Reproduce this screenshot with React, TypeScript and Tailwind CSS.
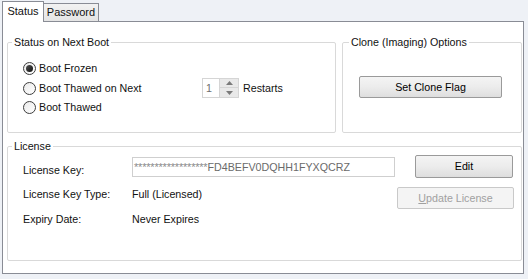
import React from 'react';

const Radio: React.FC<{ checked?: boolean; label: string }> = ({ checked, label }) => (
  <div className="flex items-center h-[19px]">
    <span className="flex items-center justify-center w-[13px] h-[13px] rounded-full border border-[#3d3d3d] bg-gradient-to-br from-[#eaeaea] to-white">
      {checked && <span className="w-[7px] h-[7px] rounded-full bg-gradient-to-br from-[#555] to-[#111]" />}
    </span>
    <span className="ml-[3px] leading-[13px]">{label}</span>
  </div>
);

const Button: React.FC<{ className?: string; disabled?: boolean; children: React.ReactNode }> = ({
  className = '',
  disabled,
  children,
}) => (
  <button
    disabled={disabled}
    className={
      'flex items-center justify-center rounded-[2px] border leading-[13px] ' +
      (disabled
        ? 'border-[#c9c9c9] bg-[#f4f4f4] text-[#a0a0a0] '
        : 'border-[#9a9a9a] bg-gradient-to-b from-[#f4f4f4] via-[#ececec] to-[#dedede] text-black ') +
      className
    }
  >
    {children}
  </button>
);

const Group: React.FC<{ title: string; titleInset?: string; className?: string; children: React.ReactNode }> = ({
  title,
  titleInset = 'ml-[4px]',
  className = '',
  children,
}) => (
  <fieldset className={'border border-[#d9d9d9] rounded-[2px] ' + className}>
    <legend className={'px-[2px] leading-[13px] ' + titleInset}>{title}</legend>
    {children}
  </fieldset>
);

export default function App() {
  return (
    <div
      className="w-[528px] h-[279px] bg-[#eef1f6] pt-[1px] px-[2px] text-[10.7px] text-[#111]"
      style={{ fontFamily: '"Liberation Sans", Arial, sans-serif' }}
    >
      {/* tabs */}
      <div className="flex items-end h-[20px]">
        <div className="relative z-10 -mb-px h-[21px] w-[42px] border border-b-0 border-[#898c95] bg-white flex items-start justify-center pt-[3px] leading-[13px] text-[11px]">
          Status
        </div>
        <div className="h-[18px] w-[55px] border border-l-0 border-b-0 border-[#898c95] bg-gradient-to-b from-[#f2f2f2] to-[#e4e4e4] flex items-start justify-center pt-[2px] leading-[13px] text-[11px]">
          Password
        </div>
      </div>

      {/* panel */}
      <div className="w-[522px] h-[253px] border border-[#898c95] bg-white pt-[14px] pl-[4px]">
        <div className="flex gap-[6px]">
          <Group title="Status on Next Boot" className="w-[329px] h-[97px]">
            <div className="pt-[10px] pl-[15px]">
              <Radio checked label="Boot Frozen" />
              <div className="flex items-center">
                <div className="w-[179px]">
                  <Radio label="Boot Thawed on Next" />
                </div>
                <div className="flex items-center h-[20px]">
                  <div className="w-[18px] h-[20px] border border-[#d5d5d5] text-[#6d6d6d] pl-[3px] leading-[18px]">1</div>
                  <div className="flex flex-col w-[20px] h-[20px] ml-[-1px]">
                    <div className="h-[10px] border border-[#d5d5d5] bg-[#e9e9e9] flex items-center justify-center">
                      <svg width="7" height="4" viewBox="0 0 7 4">
                        <path d="M3.5 0 L7 4 L0 4 Z" fill="#7a7a7a" />
                      </svg>
                    </div>
                    <div className="h-[10px] border border-t-0 border-[#d5d5d5] bg-[#e9e9e9] flex items-center justify-center">
                      <svg width="7" height="4" viewBox="0 0 7 4">
                        <path d="M0 0 L7 0 L3.5 4 Z" fill="#7a7a7a" />
                      </svg>
                    </div>
                  </div>
                  <span className="ml-[4px] leading-[13px]">Restarts</span>
                </div>
              </div>
              <Radio label="Boot Thawed" />
            </div>
          </Group>
          <Group title="Clone (Imaging) Options" titleInset="ml-[6px]" className="w-[180px] h-[97px]">
            <div className="pt-[27px] pl-[16px]">
              <Button className="w-[143px] h-[22px]">Set Clone Flag</Button>
            </div>
          </Group>
        </div>

        <Group title="License" className="mt-[7px] w-[515px] h-[121px]">
          <div className="pt-[2px] pl-[15px]">
            <div className="flex items-start h-[23px]">
              <span className="w-[109px] mt-[9px] leading-[13px]">License Key:</span>
              <div className="mt-[2px] w-[263px] h-[20px] border border-[#cfcfcf] text-[#6a6a6a] pl-[1px] leading-[18px] whitespace-nowrap overflow-hidden">
                <span className="text-[11px] tracking-[-0.2px] text-[#8a8a8a]">******************</span>FD4BEFV0DQHH1FYXQCRZ
              </div>
              <Button className="ml-[20px] w-[98px] h-[23px]">Edit</Button>
            </div>
            <div className="flex items-start mt-[9px] h-[22px]">
              <span className="w-[109px] mt-[1px] leading-[13px]">License Key Type:</span>
              <span className="w-[265px] mt-[1px] leading-[13px]">Full (Licensed)</span>
              <Button disabled className="w-[117px] h-[22px]">
                <span>
                  <span className="underline">U</span>pdate License
                </span>
              </Button>
            </div>
            <div className="flex items-start mt-[4px]">
              <span className="w-[109px] leading-[13px]">Expiry Date:</span>
              <span className="leading-[13px]">Never Expires</span>
            </div>
          </div>
        </Group>
      </div>
    </div>
  );
}
